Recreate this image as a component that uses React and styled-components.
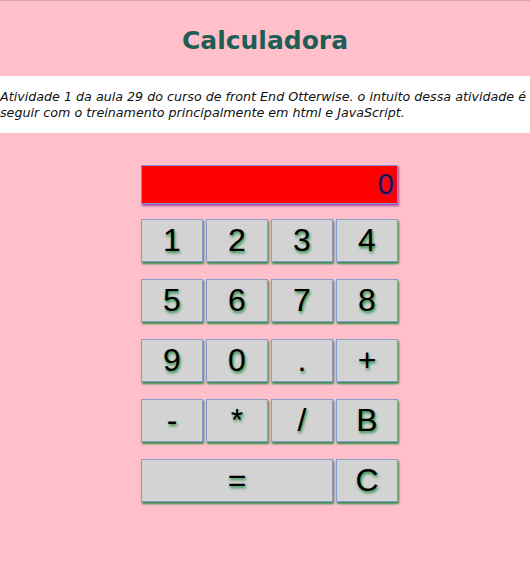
import React from 'react'
import styled, {createGlobalStyle} from 'styled-components'

const GlobalStl = createGlobalStyle`
  html, body {
    margin: 0;
    padding: 0;
    background: pink;
    overflow: hidden;
  }
`

const PageStl = styled.div`
  width: 530px;
  min-height: 577px;
  background: pink;
  border-top: 1px solid #d9a9b0;
  box-sizing: border-box;
`

const TitleStl = styled.h1`
  margin: 0;
  height: 75px;
  padding-top: 3px;
  box-sizing: border-box;
  display: flex;
  align-items: center;
  justify-content: center;
  font-family: "DejaVu Sans", Verdana, sans-serif;
  font-size: 25px;
  font-weight: bold;
  color: #1f5e55;
`

const IntroStl = styled.div`
  background: #fff;
  height: 57px;
  display: flex;
  align-items: center;
  overflow: hidden;
`

const IntroTextStl = styled.p`
  margin: 0;
  flex: 0 0 545px;
  font-family: "DejaVu Sans", Verdana, sans-serif;
  font-style: italic;
  font-size: 12.7px;
  line-height: 16px;
  color: #111;
`

const CalcStl = styled.div`
  margin: 32px 0 0 141px;
  width: 258px;
  display: grid;
  grid-template-columns: repeat(4, 62px);
  column-gap: 3px;
  row-gap: 17px;
`

const DisplayStl = styled.div`
  grid-column: 1 / -1;
  height: 37px;
  margin-bottom: -2px;
  background: red;
  border: 1px solid #8f8fd8;
  box-shadow: 1px 2px 2px #a04aa8;
  display: flex;
  align-items: center;
  justify-content: flex-end;
  padding-right: 3px;
  font-family: "Liberation Sans", Arial, sans-serif;
  font-size: 29px;
  color: #1a1040;
  text-shadow: 1px 1px 2px #7a2a9a;
`

const KeyStl = styled.button`
  grid-column: ${({wide}) => wide ? 'span 3' : 'auto'};
  height: 43px;
  padding: 0;
  margin: 0;
  background: #d3d3d3;
  border: 1px solid #8a9ccc;
  box-shadow: 1px 2px 2px #2e8b45;
  font-family: "Liberation Sans", Arial, sans-serif;
  font-size: 32px;
  color: #000;
  text-shadow: 1px 2px 3px #1f8a3a;
  cursor: pointer;
`

const keys = ['1', '2', '3', '4', '5', '6', '7', '8', '9', '0', '.', '+', '-', '*', '/', 'B']

export default function App() {
  return (
    <PageStl>
      <GlobalStl />
      <TitleStl>Calculadora</TitleStl>
      <IntroStl>
        <IntroTextStl>
          Atividade 1 da aula 29 do curso de front End Otterwise. o intuito dessa atividade é
          seguir com o treinamento principalmente em html e JavaScript.
        </IntroTextStl>
      </IntroStl>
      <CalcStl>
        <DisplayStl>0</DisplayStl>
        {keys.map(k => <KeyStl key={k}>{k}</KeyStl>)}
        <KeyStl wide>=</KeyStl>
        <KeyStl>C</KeyStl>
      </CalcStl>
    </PageStl>
  )
}
